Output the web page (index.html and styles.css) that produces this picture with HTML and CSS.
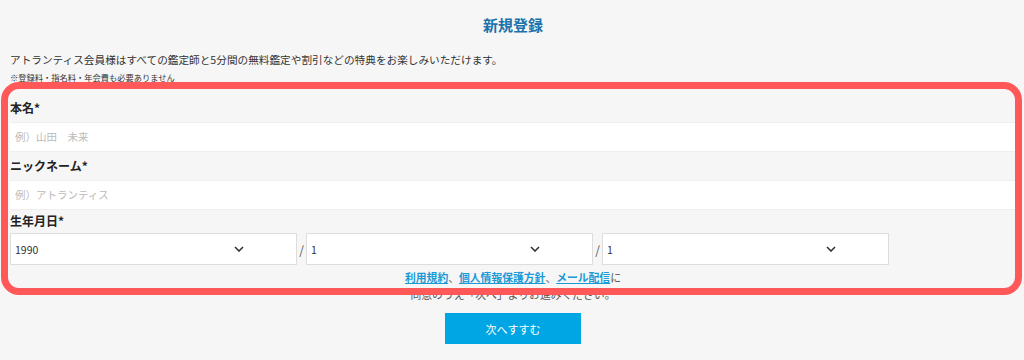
FILE: index.html
```html
<!DOCTYPE html>
<html lang="ja">
<head>
  <meta charset="UTF-8" />
  <title>新規登録</title>
  <meta name="viewport" content="width=device-width, initial-scale=1.0" />
  <link rel="stylesheet" href="styles.css">
</head>
<body>
  <div class="page">
    <h1 class="title">新規登録</h1>
    <p class="lead">アトランティス会員様はすべての鑑定師と5分間の無料鑑定や割引などの特典をお楽しみいただけます。</p>
    <p class="note">※登録料・指名料・年会費も必要ありません</p>

    <!-- Form fields -->
    <div class="field-label first">本名*</div>
    <div class="text-input">例）山田　未来</div>

    <div class="field-label">ニックネーム*</div>
    <div class="text-input">例）アトランティス</div>

    <div class="field-label birth">生年月日*</div>
    <div class="date-row">
      <div class="select-box">
        <span class="select-value">1990</span>
        <svg class="chevron" width="10" height="6" viewBox="0 0 10 6"><path d="M1 1 L5 5 L9 1" fill="none" stroke="#333" stroke-width="1.6"/></svg>
      </div>
      <span class="slash">/</span>
      <div class="select-box">
        <span class="select-value">1</span>
        <svg class="chevron" width="10" height="6" viewBox="0 0 10 6"><path d="M1 1 L5 5 L9 1" fill="none" stroke="#333" stroke-width="1.6"/></svg>
      </div>
      <span class="slash">/</span>
      <div class="select-box">
        <span class="select-value">1</span>
        <svg class="chevron" width="10" height="6" viewBox="0 0 10 6"><path d="M1 1 L5 5 L9 1" fill="none" stroke="#333" stroke-width="1.6"/></svg>
      </div>
    </div>

    <p class="agree"><a href="#">利用規約</a>、<a href="#">個人情報保護方針</a>、<a href="#">メール配信</a>に</p>
    <p class="agree second">同意のうえ「次へ」よりお進みください。</p>

    <div class="actions">
      <button class="next-btn">次へすすむ</button>
    </div>
  </div>

  <!-- Highlight frame drawn over the form -->
  <div class="highlight"></div>
</body>
</html>
```

FILE: styles.css
```css
html, body {
  margin: 0;
  padding: 0;
  height: 100%;
  overflow: hidden;
  background: #f6f6f6;
  font-family: "Noto Sans CJK JP", "Noto Sans", sans-serif;
  color: #333;
}
.page {
  padding: 15px 8px 0 10px;
}
.title {
  margin: 0;
  font-size: 15px;
  line-height: 20px;
  font-weight: bold;
  color: #1b72ad;
  text-align: center;
}
.lead {
  margin: 17px 0 0;
  font-size: 10.65px;
  line-height: 16px;
}
.note {
  margin: 3px 0 0;
  font-size: 8.25px;
  line-height: 12px;
}
/* Labels above each input */
.field-label {
  font-size: 12px;
  line-height: 20px;
  font-weight: bold;
  color: #222;
  padding: 4px 0;
}
.field-label.first {
  padding-top: 15px;
}
.field-label.birth {
  padding: 1px 0 2px;
}
.text-input {
  box-sizing: border-box;
  height: 30px;
  background: #fff;
  border-top: 1px solid #efefef;
  border-bottom: 1px solid #efefef;
  padding-left: 5px;
  font-size: 10.5px;
  line-height: 28px;
  color: #bbb;
}
.date-row {
  display: flex;
  align-items: center;
}
.select-box {
  box-sizing: border-box;
  width: 287px;
  height: 32px;
  display: flex;
  align-items: center;
  background: #fff;
  border: 1px solid #ddd;
  padding-left: 4px;
}
.select-value {
  flex: 1;
  font-size: 10.5px;
  color: #333;
}
.chevron {
  margin-right: 52px;
}
.slash {
  width: 9px;
  text-align: center;
  font-size: 12px;
  color: #555;
}
.agree {
  margin: 4px 0 0;
  text-align: center;
  font-size: 10.8px;
  line-height: 16px;
  color: #555;
}
.agree.second {
  margin-top: 1px;
}
.agree a {
  color: #1a9ad6;
  font-weight: bold;
  text-decoration: underline;
}
.actions {
  display: flex;
  justify-content: center;
  margin-top: 11px;
}
.next-btn {
  width: 136px;
  height: 31px;
  border: none;
  background: #00a5e3;
  color: #fff;
  font-family: inherit;
  font-size: 11px;
  cursor: pointer;
}
.highlight {
  position: absolute;
  left: 1px;
  top: 82px;
  width: 1007px;
  height: 199px;
  border: 7px solid #ff5858;
  border-radius: 18px;
  pointer-events: none;
}
```
